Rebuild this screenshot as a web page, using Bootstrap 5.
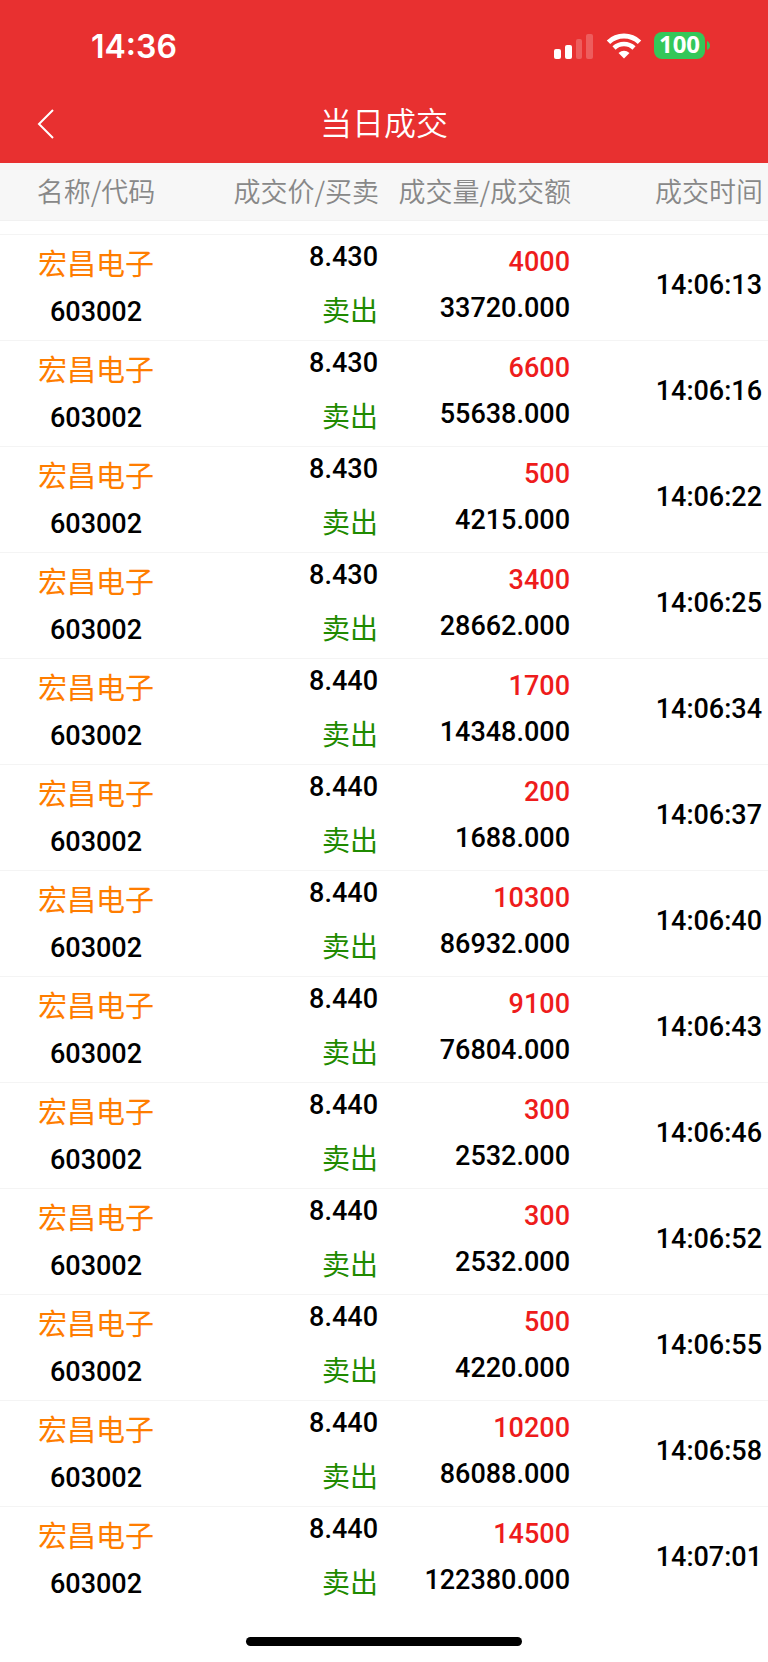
<!DOCTYPE html>
<html lang="zh-CN">
<head>
<meta charset="utf-8">
<meta name="viewport" content="width=device-width, initial-scale=1">
<title>当日成交</title>
<link href="https://cdn.jsdelivr.net/npm/bootstrap@5.3.0/dist/css/bootstrap.min.css" rel="stylesheet">
<style>
body{font-family:Roboto,"Noto Sans CJK SC",sans-serif;color:#000;background:#fff}
.app-top{background:#e83030}
.status-row{height:91px;padding:0 58px 0 91px}
.clock{padding-top:3px;font:600 32px/36px Inter,sans-serif}
.title-row{height:72px}
.page-title{padding-top:6px;font:350 32px/48px "Noto Sans CJK SC",sans-serif}
.back-btn{left:24px;width:44px;height:66px}
.battery{width:51px;height:27px;border-radius:8px;background:#34c759;font:700 24px/24px "Noto Sans",sans-serif}
.trades{table-layout:fixed}
.trades th{height:57px;padding:0 5px 0 0;background:#f7f7f7;border-bottom:1px solid #f1f1f1;color:#888;font:350 27px/40px "Noto Sans CJK SC",sans-serif;white-space:nowrap}
.trades .spacer td{height:14px;padding:0}
.trade td{height:106px;padding:0 6px 0 0;border-top:1px solid #f4f4f4;font-size:27px;font-weight:500;line-height:44px;vertical-align:top}
.trades th:first-child,.trade td:first-child{padding-right:0;text-align:center}
.trade span{display:block}
.trade .c-name{padding-top:5px}
.trade .c-vol{padding-top:5px}
.trade .c-time{padding-bottom:4px;vertical-align:middle}
.c-name span+span{margin-top:6px}
.c-price span+span{margin-top:8px}
.c-vol span+span{margin-top:2px}
.stock,.sell{font-family:"Noto Sans CJK SC",sans-serif;font-weight:400}
.stock{font-size:29px;color:#ff7d00}
.sell{font-size:28px;color:#1f8a00}
.qty{color:#ee1c1c}
.home-bar{width:36%;height:9px;background:#000}
</style>
</head>
<body class="d-flex flex-column min-vh-100">
<header class="app-top text-white">
  <div class="status-row d-flex align-items-center justify-content-between">
    <span class="clock">14:36</span>
    <div class="d-flex align-items-center">
      <svg width="40" height="26" viewBox="0 0 40 26" fill="#fff" aria-hidden="true"><rect x="0" y="16" width="7" height="10" rx="2"/><rect x="11" y="12" width="7" height="14" rx="2"/><rect x="22" y="6" width="6" height="20" rx="2" opacity=".22"/><rect x="32" y="1" width="7" height="25" rx="2" opacity=".22"/></svg>
      <svg class="ms-2 me-2" width="44" height="26" viewBox="0 0 44 26" fill="none" stroke="#fff" aria-hidden="true"><path d="M6.500 9.200A22.500 22.500 0 0 1 37.500 9.200" stroke-width="5"/><path d="M12 15A14.500 14.500 0 0 1 32 15" stroke-width="4.500"/><path d="M22 25.500L16.500 20Q22 15.500 27.500 20Z" fill="#fff" stroke="none"/></svg>
      <span class="battery d-flex align-items-center justify-content-center pb-1">100</span>
      <svg width="5" height="9" viewBox="0 0 5 9" aria-hidden="true"><path d="M2 0Q5 1.500 5 4.500T2 9Z" fill="#34c759"/></svg>
    </div>
  </div>
  <div class="title-row position-relative d-flex justify-content-center">
    <button type="button" class="back-btn btn p-0 border-0 position-absolute top-0 d-flex align-items-center justify-content-center" aria-label="返回"><svg width="18" height="32" viewBox="0 0 18 32" fill="none" stroke="#fff" stroke-width="2"><path d="M16 2L2 16L16 30"/></svg></button>
    <h1 class="page-title m-0">当日成交</h1>
  </div>
</header>
<main class="flex-grow-1">
<table class="trades w-100 text-end">
<thead><tr><th scope="col">名称/代码</th><th scope="col">成交价/买卖</th><th scope="col">成交量/成交额</th><th scope="col">成交时间</th></tr></thead>
<tbody>
<tr class="spacer"><td colspan="4"></td></tr>
<tr class="trade"><td class="c-name"><span class="stock">宏昌电子</span><span>603002</span></td><td class="c-price"><span>8.430</span><span class="sell">卖出</span></td><td class="c-vol"><span class="qty">4000</span><span>33720.000</span></td><td class="c-time">14:06:13</td></tr>
<tr class="trade"><td class="c-name"><span class="stock">宏昌电子</span><span>603002</span></td><td class="c-price"><span>8.430</span><span class="sell">卖出</span></td><td class="c-vol"><span class="qty">6600</span><span>55638.000</span></td><td class="c-time">14:06:16</td></tr>
<tr class="trade"><td class="c-name"><span class="stock">宏昌电子</span><span>603002</span></td><td class="c-price"><span>8.430</span><span class="sell">卖出</span></td><td class="c-vol"><span class="qty">500</span><span>4215.000</span></td><td class="c-time">14:06:22</td></tr>
<tr class="trade"><td class="c-name"><span class="stock">宏昌电子</span><span>603002</span></td><td class="c-price"><span>8.430</span><span class="sell">卖出</span></td><td class="c-vol"><span class="qty">3400</span><span>28662.000</span></td><td class="c-time">14:06:25</td></tr>
<tr class="trade"><td class="c-name"><span class="stock">宏昌电子</span><span>603002</span></td><td class="c-price"><span>8.440</span><span class="sell">卖出</span></td><td class="c-vol"><span class="qty">1700</span><span>14348.000</span></td><td class="c-time">14:06:34</td></tr>
<tr class="trade"><td class="c-name"><span class="stock">宏昌电子</span><span>603002</span></td><td class="c-price"><span>8.440</span><span class="sell">卖出</span></td><td class="c-vol"><span class="qty">200</span><span>1688.000</span></td><td class="c-time">14:06:37</td></tr>
<tr class="trade"><td class="c-name"><span class="stock">宏昌电子</span><span>603002</span></td><td class="c-price"><span>8.440</span><span class="sell">卖出</span></td><td class="c-vol"><span class="qty">10300</span><span>86932.000</span></td><td class="c-time">14:06:40</td></tr>
<tr class="trade"><td class="c-name"><span class="stock">宏昌电子</span><span>603002</span></td><td class="c-price"><span>8.440</span><span class="sell">卖出</span></td><td class="c-vol"><span class="qty">9100</span><span>76804.000</span></td><td class="c-time">14:06:43</td></tr>
<tr class="trade"><td class="c-name"><span class="stock">宏昌电子</span><span>603002</span></td><td class="c-price"><span>8.440</span><span class="sell">卖出</span></td><td class="c-vol"><span class="qty">300</span><span>2532.000</span></td><td class="c-time">14:06:46</td></tr>
<tr class="trade"><td class="c-name"><span class="stock">宏昌电子</span><span>603002</span></td><td class="c-price"><span>8.440</span><span class="sell">卖出</span></td><td class="c-vol"><span class="qty">300</span><span>2532.000</span></td><td class="c-time">14:06:52</td></tr>
<tr class="trade"><td class="c-name"><span class="stock">宏昌电子</span><span>603002</span></td><td class="c-price"><span>8.440</span><span class="sell">卖出</span></td><td class="c-vol"><span class="qty">500</span><span>4220.000</span></td><td class="c-time">14:06:55</td></tr>
<tr class="trade"><td class="c-name"><span class="stock">宏昌电子</span><span>603002</span></td><td class="c-price"><span>8.440</span><span class="sell">卖出</span></td><td class="c-vol"><span class="qty">10200</span><span>86088.000</span></td><td class="c-time">14:06:58</td></tr>
<tr class="trade"><td class="c-name"><span class="stock">宏昌电子</span><span>603002</span></td><td class="c-price"><span>8.440</span><span class="sell">卖出</span></td><td class="c-vol"><span class="qty">14500</span><span>122380.000</span></td><td class="c-time">14:07:01</td></tr>
</tbody>
</table>
</main>
<footer class="d-flex justify-content-center pb-3"><div class="home-bar rounded-pill"></div></footer>
<script src="https://cdn.jsdelivr.net/npm/bootstrap@5.3.0/dist/js/bootstrap.bundle.min.js"></script>
</body>
</html>
